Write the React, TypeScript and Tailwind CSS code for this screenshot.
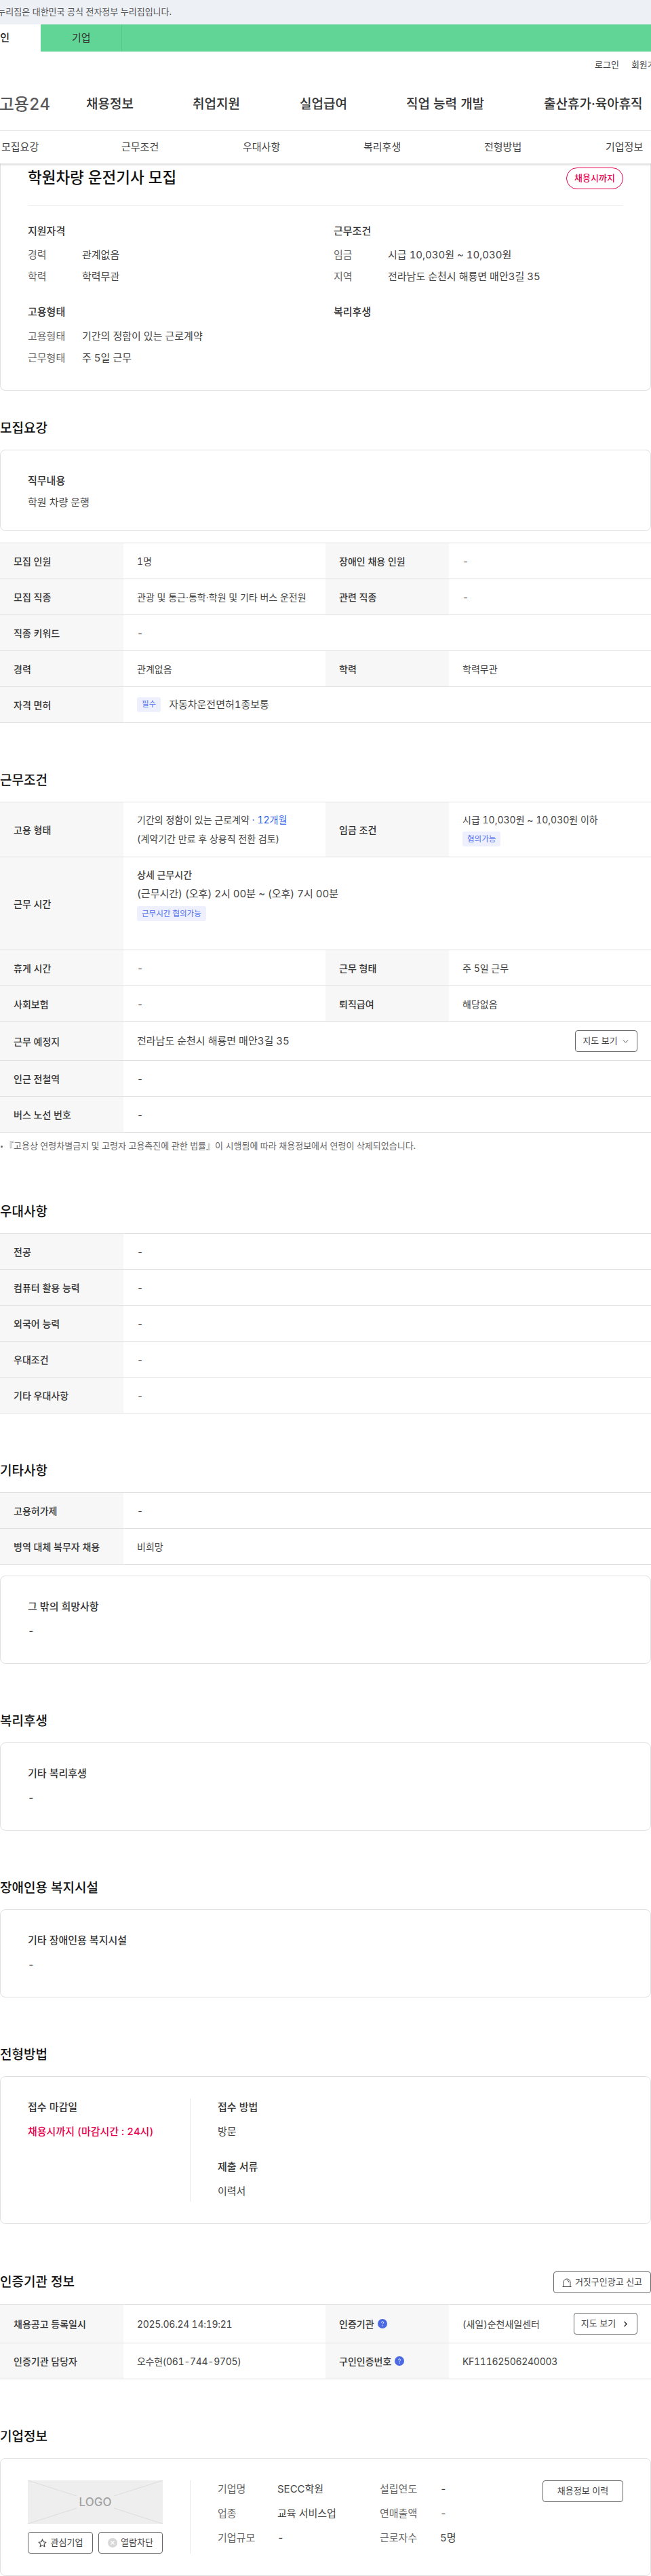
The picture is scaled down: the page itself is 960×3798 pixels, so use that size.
import React from "react";
import { ChevronDown, ChevronRight } from "lucide-react";

const FONT = "font-['Inter','Noto_Sans_CJK_KR',sans-serif] tabular-nums";

function Heading({ children, className = "" }: { children: React.ReactNode; className?: string }) {
  return <h2 className={`h-[30px] flex items-center whitespace-nowrap text-[19px] font-medium text-[#111] ${className}`}>{children}</h2>;
}

function Label({ children }: { children?: React.ReactNode }) {
  return <div className="w-[182px] shrink-0 self-stretch bg-[#f7f7f7] pl-5 flex items-center gap-[5px] text-[14px] font-medium text-[#333]">{children}</div>;
}

function Value({ children, className = "w-[298px]" }: { children?: React.ReactNode; className?: string }) {
  return <div className={`${className} shrink-0 self-stretch pl-5 flex items-center text-[14px] text-[#444]`}>{children}</div>;
}

function Row({ children, h = "h-[53px]" }: { children: React.ReactNode; h?: string }) {
  return <div className={`${h} flex border-b border-[#e0e0e0]`}>{children}</div>;
}

function Tag({ children }: { children: React.ReactNode }) {
  return <span className="inline-flex h-[22px] items-center rounded-[3px] bg-[#eef1fd] px-[7px] text-[11.5px] text-[#4f6fee] whitespace-nowrap">{children}</span>;
}

function Card({ children, className = "" }: { children: React.ReactNode; className?: string }) {
  return <div className={`rounded-[8px] border border-[#e0e0e0] ${className}`}>{children}</div>;
}

function SubTitle({ children, className = "" }: { children: React.ReactNode; className?: string }) {
  return <div className={`h-[20px] flex items-center text-[15px] font-medium text-[#333] ${className}`}>{children}</div>;
}

function Body({ children, className = "" }: { children: React.ReactNode; className?: string }) {
  return <div className={`h-[20px] flex items-center text-[15px] text-[#444] ${className}`}>{children}</div>;
}

function TextCard({ title, value, h = "h-[130px]", gap = "mt-[16px]" }: { title: string; value: string; h?: string; gap?: string }) {
  return (
    <Card className={`${h} px-[40px] pt-[35px]`}>
      <SubTitle>{title}</SubTitle>
      <Body className={gap}>{value}</Body>
    </Card>
  );
}

function Info({ label, value }: { label: string; value: string }) {
  return (
    <div className="h-[32px] flex items-center text-[15px]">
      <div className="w-[80px] text-[#666]">{label}</div>
      <div className="text-[#444]">{value}</div>
    </div>
  );
}

function Help() {
  return (
    <svg width="14" height="14" viewBox="0 0 14 14" className="shrink-0">
      <circle cx="7" cy="7" r="7" fill="#4a69e2" />
      <path d="M5.4 5.5a1.6 1.6 0 1 1 2.4 1.4c-.5.3-.8.6-.8 1.1" stroke="#fff" strokeWidth="1" fill="none" />
      <circle cx="7" cy="10" r=".7" fill="#fff" />
    </svg>
  );
}

const Btn = "rounded-[4px] border border-[#666] flex items-center justify-center text-[13px] text-[#444] whitespace-nowrap";

export default function App() {
  return (
    <div className={`w-[960px] h-[3798px] overflow-hidden bg-white text-[#333] ${FONT}`}>
      <div className="h-9 bg-[#edf0f5] flex items-center">
        <div className="w-[253px] shrink-0 flex justify-end whitespace-nowrap text-[13px] text-[#555]">이 누리집은 대한민국 공식 전자정부 누리집입니다.</div>
      </div>
      <div className="h-10 bg-[#61d595] flex">
        <div className="w-[60px] bg-white flex items-center">
          <div className="w-[14px] shrink-0 flex justify-end whitespace-nowrap text-[15px] font-medium text-[#222]">개인</div>
        </div>
        <div className="w-[120px] border-r border-[#55c888] flex items-center pl-[46px] text-[15px] text-[#333]">기업</div>
      </div>
      <div className="h-[117px] border-b border-[#e8e8e8]">
        <div className="h-10 flex items-center pl-[877px] gap-[18px] whitespace-nowrap text-[13px] text-[#444]">
          <span>로그인</span>
          <span>회원가입</span>
        </div>
        <div className="mt-[18px] flex items-center h-[40px] whitespace-nowrap text-[19px] font-medium text-[#333]">
          <div className="w-[74px] shrink-0 flex justify-end text-[24px] text-[#5a5a5a] font-medium">고용24</div>
          <div className="ml-[53px] w-[157px] shrink-0">채용정보</div>
          <div className="w-[158px] shrink-0">취업지원</div>
          <div className="w-[157px] shrink-0">실업급여</div>
          <div className="w-[203px] shrink-0">직업 능력 개발</div>
          <div className="shrink-0">출산휴가·육아휴직</div>
        </div>
      </div>
      <div className="relative z-10 h-[48px] bg-white flex items-center pl-[2px] text-[15px] text-[#444] shadow-[0_2px_3px_rgba(0,0,0,0.15)]">
        <div className="w-[177px]">모집요강</div>
        <div className="w-[179px]">근무조건</div>
        <div className="w-[178px]">우대사항</div>
        <div className="w-[178px]">복리후생</div>
        <div className="w-[179px]">전형방법</div>
        <div>기업정보</div>
      </div>

      <div className="h-[335px] rounded-b-[8px] border border-t-0 border-[#e0e0e0] px-[40px]">
        <div className="h-[62px] border-b border-[#e8e8e8] flex justify-between items-start">
          <h1 className="text-[22.5px] leading-[42px] font-medium text-[#111]">학원차량 운전기사 모집</h1>
          <div className="mt-[6px] h-[32px] w-[84px] rounded-full border border-[#e6004d] flex items-center justify-center text-[13px] font-medium text-[#e6004d]">채용시까지</div>
        </div>
        <div className="pt-[28px] grid grid-cols-[451px_1fr]">
          <div>
            <SubTitle>지원자격</SubTitle>
            <div className="mt-[9px]">
              <Info label="경력" value="관계없음" />
              <Info label="학력" value="학력무관" />
            </div>
            <SubTitle className="mt-[26px]">고용형태</SubTitle>
            <div className="mt-[10px]">
              <Info label="고용형태" value="기간의 정함이 있는 근로계약" />
              <Info label="근무형태" value="주 5일 근무" />
            </div>
          </div>
          <div>
            <SubTitle>근무조건</SubTitle>
            <div className="mt-[9px]">
              <Info label="임금" value="시급 10,030원 ~ 10,030원" />
              <Info label="지역" value="전라남도 순천시 해룡면 매안3길 35" />
            </div>
            <SubTitle className="mt-[26px]">복리후생</SubTitle>
          </div>
        </div>
      </div>

      <Heading className="mt-[41px] mb-[16px]">모집요강</Heading>
      <TextCard title="직무내용" value="학원 차량 운행" h="h-[120px]" gap="mt-[12px]" />
      <div className="mt-[17px] border-t border-[#e0e0e0]">
        <Row><Label>모집 인원</Label><Value>1명</Value><Label>장애인 채용 인원</Label><Value>-</Value></Row>
        <Row><Label>모집 직종</Label><Value>관광 및 통근·통학·학원 및 기타 버스 운전원</Value><Label>관련 직종</Label><Value>-</Value></Row>
        <Row><Label>직종 키워드</Label><Value>-</Value></Row>
        <Row><Label>경력</Label><Value>관계없음</Value><Label>학력</Label><Value>학력무관</Value></Row>
        <Row><Label>자격 면허</Label><Value className="w-[600px] gap-3"><Tag>필수</Tag><span className="text-[15px]">자동차운전면허1종보통</span></Value></Row>
      </div>

      <Heading className="mt-[70px] mb-[16px]">근무조건</Heading>
      <div className="border-t border-[#e0e0e0]">
        <Row h="h-[81px]">
          <Label>고용 형태</Label>
          <div className="w-[298px] pl-5 pt-[12px] text-[14px] leading-[28px] text-[#444]">
            <div>기간의 정함이 있는 근로계약 <span className="text-[#2f5fe8]">· 12개월</span></div>
            <div>(계약기간 만료 후 상용직 전환 검토)</div>
          </div>
          <Label>임금 조건</Label>
          <div className="pl-5 pt-[12px] text-[14px] leading-[28px] text-[#444]">
            <div>시급 10,030원 ~ 10,030원 이하</div>
            <div className="mt-[3px] h-[22px] flex"><Tag>협의가능</Tag></div>
          </div>
        </Row>
        <Row h="h-[137px]">
          <Label>근무 시간</Label>
          <div className="pl-5 pt-[12px] text-[14px] leading-[28px] text-[#444]">
            <div className="font-medium">상세 근무시간</div>
            <div className="text-[15px]">(근무시간) (오후) 2시 00분 ~ (오후) 7시 00분</div>
            <div className="mt-[4px] h-[22px] flex"><Tag>근무시간 협의가능</Tag></div>
          </div>
        </Row>
        <Row><Label>휴게 시간</Label><Value>-</Value><Label>근무 형태</Label><Value>주 5일 근무</Value></Row>
        <Row><Label>사회보험</Label><Value>-</Value><Label>퇴직급여</Label><Value>해당없음</Value></Row>
        <Row h="h-[57px]">
          <Label>근무 예정지</Label>
          <Value className="grow justify-between pr-[20px]">
            <span className="text-[15px]">전라남도 순천시 해룡면 매안3길 35</span>
            <button className={`h-[32px] w-[92px] gap-[5px] ${Btn}`}>지도 보기<ChevronDown size={13} strokeWidth={1.5} className="text-[#222]" /></button>
          </Value>
        </Row>
        <Row><Label>인근 전철역</Label><Value>-</Value></Row>
        <Row><Label>버스 노선 번호</Label><Value>-</Value></Row>
      </div>
      <div className="mt-[8px] h-[24px] flex items-center gap-[3px] whitespace-nowrap text-[13px] text-[#666]">
        <span className="ml-[1px] w-[3px] h-[3px] rounded-full bg-[#666] shrink-0" />
        <span>『고용상 연령차별금지 및 고령자 고용촉진에 관한 법률』이 시행됨에 따라 채용정보에서 연령이 삭제되었습니다.</span>
      </div>

      <Heading className="mt-[70px] mb-[16px]">우대사항</Heading>
      <div className="border-t border-[#e0e0e0]">
        <Row><Label>전공</Label><Value>-</Value></Row>
        <Row><Label>컴퓨터 활용 능력</Label><Value>-</Value></Row>
        <Row><Label>외국어 능력</Label><Value>-</Value></Row>
        <Row><Label>우대조건</Label><Value>-</Value></Row>
        <Row><Label>기타 우대사항</Label><Value>-</Value></Row>
      </div>

      <Heading className="mt-[70px] mb-[16px]">기타사항</Heading>
      <div className="border-t border-[#e0e0e0]">
        <Row><Label>고용허가제</Label><Value>-</Value></Row>
        <Row><Label>병역 대체 복무자 채용</Label><Value>비희망</Value></Row>
      </div>
      <div className="mt-[16px]"><TextCard title="그 밖의 희망사항" value="-" /></div>

      <Heading className="mt-[70px] mb-[16px]">복리후생</Heading>
      <TextCard title="기타 복리후생" value="-" />

      <Heading className="mt-[70px] mb-[16px]">장애인용 복지시설</Heading>
      <TextCard title="기타 장애인용 복지시설" value="-" />

      <Heading className="mt-[70px] mb-[16px]">전형방법</Heading>
      <Card className="h-[218px] px-[40px] pt-[32px]">
        <div className="flex h-[152px]">
          <div className="w-[240px] border-r border-[#e8e8e8] pt-[3px]">
            <SubTitle>접수 마감일</SubTitle>
            <SubTitle className="mt-[16px] !text-[#e6004d]">채용시까지 (마감시간 : 24시)</SubTitle>
          </div>
          <div className="pl-[40px] pt-[3px]">
            <SubTitle>접수 방법</SubTitle>
            <Body className="mt-[16px]">방문</Body>
            <SubTitle className="mt-[32px]">제출 서류</SubTitle>
            <Body className="mt-[16px]">이력서</Body>
          </div>
        </div>
      </Card>

      <div className="mt-[70px] mb-[16px] flex items-center justify-between h-[32px]">
        <Heading>인증기관 정보</Heading>
        <button className={`w-[144px] h-[32px] gap-[5px] ${Btn}`}>
          <svg width="14" height="13" viewBox="0 0 14 13" fill="none" stroke="#444" strokeWidth="1">
            <path d="M0.5 12.5H13.5" />
            <path d="M2 12.5V6a5 5 0 0 1 10 0V12.5" />
            <path d="M7.5 3.2A2.8 2.8 0 0 1 9.8 6" />
          </svg>
          거짓구인광고 신고
        </button>
      </div>
      <div className="border-t border-[#e0e0e0]">
        <Row h="h-[57px]">
          <Label>채용공고 등록일시</Label><Value><span className="tracking-[-0.3px]">2025.06.24 14:19:21</span></Value>
          <Label>인증기관<Help /></Label>
          <Value className="grow justify-between pr-[20px]">
            <span>(새일)순천새일센터</span>
            <button className={`h-[32px] w-[94px] gap-[8px] ${Btn}`}>지도 보기<ChevronRight size={13} strokeWidth={2.2} className="text-[#222]" /></button>
          </Value>
        </Row>
        <Row>
          <Label>인증기관 담당자</Label><Value><span className="tracking-[-0.3px]">오수현(061-744-9705)</span></Value>
          <Label>구인인증번호<Help /></Label><Value><span className="tracking-[-0.3px]">KF11162506240003</span></Value>
        </Row>
      </div>

      <Heading className="mt-[70px] mb-[16px]">기업정보</Heading>
      <Card className="h-[174px] px-[40px] pt-[32px] flex">
        <div className="w-[240px] h-[108px] border-r border-[#e8e8e8]">
          <div className="w-[199px] h-[64px] bg-[#eeeeee]">
            <svg width="199" height="64" viewBox="0 0 199 64">
              <path d="M0 0 L72 23 M199 0 L127 23 M0 64 L72 41 M199 64 L127 41" stroke="#dcdcdc" strokeWidth="1" />
              <text x="99.5" y="38" textAnchor="middle" fontSize="17" fontWeight="500" fill="#a2a2a2">LOGO</text>
            </svg>
          </div>
          <div className="mt-[12px] w-[199px] flex justify-between">
            <button className={`w-[96px] h-[32px] gap-[6px] ${Btn}`}>
              <svg width="13" height="13" viewBox="0 0 24 24" fill="none" stroke="#444" strokeWidth="2" strokeLinejoin="round"><path d="M12 2l3 6.8 7.2.8-5.4 4.9 1.5 7.3L12 18.2 5.700 21.800l1.500-7.300L1.800 9.600 9 8.800z" /></svg>
              관심기업
            </button>
            <button className={`w-[95px] h-[32px] gap-[5px] ${Btn}`}>
              <svg width="14" height="14" viewBox="0 0 14 14"><circle cx="7" cy="7" r="7" fill="#d8d8d8" /><path d="M4.500 4.500l5 5M9.500 4.500l-5 5" stroke="#fff" strokeWidth="1.200" /></svg>
              열람차단
            </button>
          </div>
        </div>
        <div className="pl-[40px] grid grid-cols-[88px_151px_89px_1fr] grid-rows-[36px_36px_36px] items-center -mt-[5px] h-[108px] w-[518px] text-[15px] text-[#444]">
          <span className="text-[#666]">기업명</span><span>SECC학원</span><span className="text-[#666]">설립연도</span><span>-</span>
          <span className="text-[#666]">업종</span><span>교육 서비스업</span><span className="text-[#666]">연매출액</span><span>-</span>
          <span className="text-[#666]">기업규모</span><span>-</span><span className="text-[#666]">근로자수</span><span>5명</span>
        </div>
        <button className={`ml-auto w-[119px] h-[32px] ${Btn}`}>채용정보 이력</button>
      </Card>
    </div>
  );
}
